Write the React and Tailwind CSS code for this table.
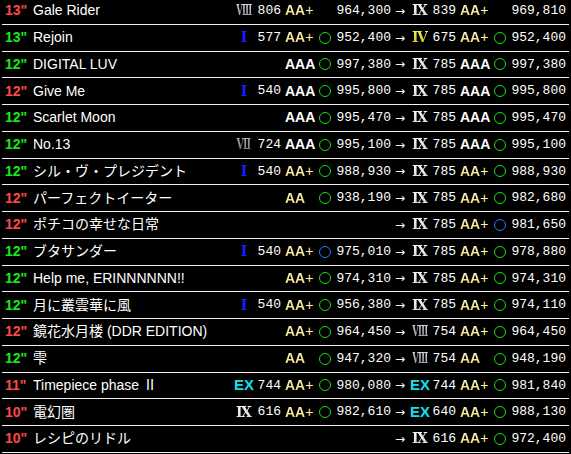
const RED = "text-[#ff4848]";
const GREEN = "text-[#18e818]";

const rows = [
  { lv: "13", red: true, title: "Gale Rider", o: ["Ⅷ", "806", "AA+", null, "964,300"], n: ["Ⅸ", "839", "AA+", null, "969,810"] },
  { lv: "13", title: "Rejoin", o: ["Ⅰ", "577", "AA+", "g", "952,400"], n: ["Ⅳ", "675", "AA+", "g", "952,400"] },
  { lv: "12", title: "DIGITAL LUV", o: [null, null, "AAA", "g", "997,380"], n: ["Ⅸ", "785", "AAA", "g", "997,380"] },
  { lv: "12", red: true, title: "Give Me", o: ["Ⅰ", "540", "AAA", "g", "995,800"], n: ["Ⅸ", "785", "AAA", "g", "995,800"] },
  { lv: "12", title: "Scarlet Moon", o: [null, null, "AAA", "g", "995,470"], n: ["Ⅸ", "785", "AAA", "g", "995,470"] },
  { lv: "12", title: "No.13", o: ["Ⅶ", "724", "AAA", "g", "995,100"], n: ["Ⅸ", "785", "AAA", "g", "995,100"] },
  { lv: "12", title: "シル・ヴ・プレジデント", o: ["Ⅰ", "540", "AA+", "g", "988,930"], n: ["Ⅸ", "785", "AA+", "g", "988,930"] },
  { lv: "12", red: true, title: "パーフェクトイーター", o: [null, null, "AA", "g", "938,190"], n: ["Ⅸ", "785", "AA+", "g", "982,680"] },
  { lv: "12", red: true, title: "ポチコの幸せな日常", o: null, n: ["Ⅸ", "785", "AA+", "b", "981,650"] },
  { lv: "12", title: "ブタサンダー", o: ["Ⅰ", "540", "AA+", "b", "975,010"], n: ["Ⅸ", "785", "AA+", "g", "978,880"] },
  { lv: "12", title: "Help me, ERINNNNNN!!", o: [null, null, "AA+", "g", "974,310"], n: ["Ⅸ", "785", "AA+", "g", "974,310"] },
  { lv: "12", title: "月に叢雲華に風", o: ["Ⅰ", "540", "AA+", "g", "956,380"], n: ["Ⅸ", "785", "AA+", "g", "974,110"] },
  { lv: "12", red: true, title: "鏡花水月楼 (DDR EDITION)", o: [null, null, "AA+", "g", "964,450"], n: ["Ⅷ", "754", "AA+", "g", "964,450"] },
  { lv: "12", title: "雫", o: [null, null, "AA", "g", "947,320"], n: ["Ⅷ", "754", "AA", "g", "948,190"] },
  { lv: "11", red: true, title: "Timepiece phase Ⅱ", o: ["EX", "744", "AA+", "g", "980,080"], n: ["EX", "744", "AA+", "g", "981,840"] },
  { lv: "10", red: true, title: "電幻圏", o: ["Ⅸ", "616", "AA+", "g", "982,610"], n: ["EX", "640", "AA+", "g", "988,130"] },
  { lv: "10", red: true, title: "レシピのリドル", o: null, n: ["Ⅸ", "616", "AA+", "g", "972,400"] },
];

const serif = "font-['DejaVu_Serif','Liberation_Serif',serif]";
const gradText = "bg-clip-text text-transparent";
const mono = "font-['Liberation_Mono',monospace] text-[13px]";

function Roman({ v }) {
  if (!v) return null;
  if (v === "EX")
    return <span className="font-['Liberation_Sans',sans-serif] font-bold text-[15px] text-[#10e0f0]">EX</span>;
  if (v === "Ⅰ") return <span className={`${serif} font-bold text-[14px] text-[#1020ff]`}>Ⅰ</span>;
  if (v === "Ⅳ")
    return <span className={`${serif} font-bold text-[14px] ${gradText} bg-linear-to-b from-[#ffff60] to-[#c0b000]`}>Ⅳ</span>;
  if (v === "Ⅶ")
    return (
      <span className={`inline-block scale-x-[0.68] ${serif} font-bold text-[14px] ${gradText} bg-linear-to-b from-[#b8b8b8] to-[#6a6a6a]`}>
        Ⅶ
      </span>
    );
  if (v === "Ⅷ")
    return (
      <span className={`inline-block scale-x-[0.6] ${serif} font-bold text-[14px] ${gradText} bg-linear-to-b from-[#e4eaf0] to-[#7a8088]`}>
        Ⅷ
      </span>
    );
  return <span className={`${serif} font-bold text-[14px] ${gradText} bg-linear-to-b from-[#ffffff] to-[#c8d0e0]`}>Ⅸ</span>;
}

function Grade({ g }) {
  if (g === "AAA") return <span className="font-bold text-white">AAA</span>;
  return (
    <span>
      <span className={`font-bold ${gradText} bg-linear-to-b from-[#fffcd8] to-[#f2d858]`}>AA</span>
      {g === "AA+" && <span className="text-[#fff4a8]">+</span>}
    </span>
  );
}

function Ring({ c }) {
  if (!c) return null;
  return (
    <span
      className={`block w-[12px] h-[12px] rounded-full border-[1.6px] ${c === "b" ? "border-[#1e80ff]" : "border-[#14e014]"}`}
    />
  );
}

function Side({ d, first }) {
  const [r, num, g, c, score] = d || [];
  return (
    <>
      <span className={`${first ? "" : "ml-[2px]"} w-[20px] flex justify-center`}>
        <Roman v={r} />
      </span>
      <span className={`${first ? "ml-[3px]" : "ml-[2px]"} w-[24px] text-right ${mono}`}>{num}</span>
      <span className="ml-[4px] w-[30px]">{g && <Grade g={g} />}</span>
      <span className="ml-[4px] w-[12px] flex justify-center">
        <Ring c={c} />
      </span>
      <span className={`ml-[4px] w-[56px] text-right ${mono}`}>{score}</span>
    </>
  );
}

export default function App() {
  return (
    <div className="w-[571px] h-[454px] overflow-hidden bg-black text-white font-['Liberation_Sans','Noto_Sans_CJK_JP',sans-serif] text-[14px]">
      <div className="-mt-[2px] px-[2px]">
        {rows.map((row, i) => (
          <div key={i} className="h-[26.75px] flex items-center border-b border-[#f0f0f0] pr-[3px]">
            <span className={`w-[31px] shrink-0 pl-[3px] font-bold ${row.red ? RED : GREEN}`}>{row.lv}"</span>
            <span className="flex-1 truncate">{row.title}</span>
            <div className="flex items-center shrink-0">
              <Side d={row.o} first />
              <span className="ml-[1px] w-[16px] text-center font-['DejaVu_Sans',sans-serif] text-[12px]">→</span>
              <Side d={row.n} />
            </div>
          </div>
        ))}
      </div>
    </div>
  );
}
